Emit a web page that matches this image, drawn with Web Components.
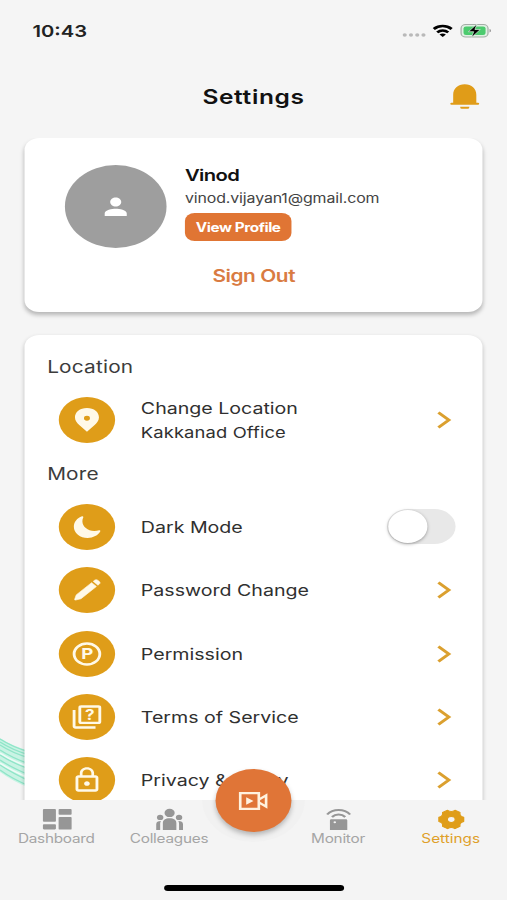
<!DOCTYPE html>
<html lang="en">
<head>
<meta charset="UTF-8">
<meta name="viewport" content="width=device-width, initial-scale=1.0">
<title>Settings</title>
<style>
    html, body {
        margin: 0;
        height: 900px;
        overflow: hidden;
        background: #f5f5f5;
    }
</style>
</head>
<body>
<settings-app></settings-app>

<script>
const define = (name, html) => {
    const template = document.createElement('template');
    template.innerHTML = html;
    customElements.define(name, class extends HTMLElement {
        constructor() {
            super();
            this.attachShadow({ mode: 'open' }).appendChild(template.content.cloneNode(true));
        }
    });
};

const icons = {
    person: '<path d="M12 12c2.2 0 4-1.8 4-4s-1.8-4-4-4-4 1.8-4 4 1.8 4 4 4zm0 2c-2.7 0-8 1.3-8 4v2.4h16V18c0-2.7-5.3-4-8-4z"/>',
    bell: '<path d="M3.600 17.600V10.500C3.600 5 7 1.200 12 1.200s8.400 3.800 8.400 9.300v7.100h1.200a.9.9 0 0 1 0 1.800H2.400a.9.9 0 0 1 0-1.800zM8.700 21h6.600v.5q0 1.400-1.200 1.400H9.900Q8.700 22.900 8.700 21.500z"/>',
    pin: '<path fill-rule="evenodd" d="M12 1.800C7 1.800 3.600 5.300 3.600 9.800c0 2.700 1.500 4.900 3.400 6.900L12 22l5-5.300c1.900-2 3.400-4.200 3.400-6.900 0-4.500-3.400-8-8.400-8zm0 6.600a2.100 2.100 0 1 1 0 4.200 2.100 2.100 0 0 1 0-4.200z"/>',
    moon: '<g transform="translate(1.500 1.500) scale(.0415)"><path d="M264 480A232 232 0 0 1 32 248c0-94 54-178.280 137.610-214.670a16 16 0 0 1 21.060 21.060C181.070 76.430 176 104.660 176 136c0 110.280 89.720 200 200 200 31.340 0 59.570-5.070 81.610-14.670a16 16 0 0 1 21.060 21.060C442.280 426 358 480 264 480z"/></g>',
    pencil: '<path d="M15.300 5.700l3.300 3.300L7.800 19.500l-3.800 1.100c-.5.100-.7-.1-.6-.6L4.500 16.200zM16.400 4.600l1-1c.6-.6 1.500-.6 2.100 0l1.200 1.200c.6.600.6 1.500 0 2.100L19.700 7.900z" stroke="currentColor" stroke-width=".5"/>',
    parking: '<circle cx="12" cy="12" r="9" fill="none" stroke="currentColor" stroke-width="2"/><text x="12.300" y="16.600" text-anchor="middle" font-family="Inter, sans-serif" font-weight="700" font-size="13">P</text>',
    terms: '<path d="M4 6H2v14c0 1.100.9 2 2 2h14v-2H4z"/><rect x="7" y="3" width="14" height="14" rx="1" fill="none" stroke="currentColor" stroke-width="2"/><text x="14" y="14.600" text-anchor="middle" font-family="Inter, sans-serif" font-weight="700" font-size="12">?</text>',
    lock: '<path d="M12 17c1.100 0 2-.9 2-2s-.9-2-2-2-2 .9-2 2 .9 2 2 2zm6-9h-1V6c0-2.760-2.240-5-5-5S7 3.240 7 6v2H6c-1.100 0-2 .9-2 2v10c0 1.100.9 2 2 2h12c1.100 0 2-.9 2-2V10c0-1.100-.9-2-2-2zM8.900 6c0-1.710 1.390-3.100 3.100-3.100s3.100 1.390 3.100 3.100v2H8.900V6zM18 20H6V10h12v10z"/>',
    chevron: '<path d="M10 4.500L18.500 12 10 19.500" fill="none" stroke="currentColor" stroke-width="2.700"/>',
    dashboard: '<rect x="1" y="2" width="10.200" height="12.200" rx=".8"/><rect x="1" y="16.500" width="10.200" height="5" rx=".8"/><rect x="13.300" y="2" width="10.200" height="5.400" rx=".8"/><rect x="13.300" y="9.600" width="10.200" height="12" rx=".8"/>',
    group: '<circle cx="12" cy="5.700" r="4"/><circle cx="4.600" cy="10" r="2.500"/><circle cx="19.400" cy="10" r="2.500"/><path d="M6.700 22v-6.500c0-3.200 2-4.700 5.300-4.700s5.300 1.500 5.300 4.700V22zM1.500 22v-5.500c0-2 1.300-3 3.700-3-.5 1-.6 1.600-.6 3V22zM22.500 22v-5.500c0-2-1.300-3-3.700-3 .5 1 .6 1.600.6 3V22z"/>',
    remote: '<path fill-rule="evenodd" d="M6.200 11.800h11.600q1 0 1 1V22H5.200v-9.200q0-1 1-1zM9 13.700a1 1 0 1 0 0 2 1 1 0 0 0 0-2z"/><path d="M3 7.200c4.600-5.800 13.400-5.800 18 0M6.800 9.600c2.800-3.300 7.600-3.300 10.400 0" fill="none" stroke="currentColor" stroke-width="1.900"/>',
    gear: '<g transform="translate(0 .9) scale(1 .92)"><path fill-rule="evenodd" d="M21.700 9.750V14.250Q18.100 15.500 18.800 19.300L14.900 21.600Q12 19 9.100 21.600L5.200 19.300Q5.900 15.500 2.300 14.250V9.750Q5.900 8.500 5.200 4.700L9.100 2.400Q12 5 14.900 2.400L18.800 4.700Q18.100 8.500 21.700 9.750zM12 8.900a3.100 3.100 0 1 0 0 6.200 3.100 3.100 0 0 0 0-6.200z" stroke="currentColor" stroke-width="1" stroke-linejoin="round"/></g>',
    video: '<path d="M2 4.800h14v14.400H2zM16 10.800l5.500-4v10.400l-5.500-4" fill="none" stroke="currentColor" stroke-width="2"/><path d="M6.500 8.500v7l5.500-3.500z"/>'
};

class AppIcon extends HTMLElement {
    connectedCallback() {
        if (this.shadowRoot) return;
        this.attachShadow({ mode: 'open' }).innerHTML = `
            <style>
                :host { display: block; width: 28px; height: 28px; flex: none; }
                svg { display: block; width: 100%; height: 100%; fill: currentColor; }
            </style>
            <svg viewBox="0 0 24 24">${icons[this.getAttribute('name')]}</svg>`;
    }
}
customElements.define('app-icon', AppIcon);

define('status-bar', `
<style>
    :host {
        height: 62px;
        padding: 0 13px 0 26.500px;
        display: flex;
        align-items: center;
        justify-content: space-between;
        box-sizing: border-box;
        font-size: 16.500px;
        font-weight: 600;
        color: #222;
    }
    svg { display: block; }
</style>
<span>10:43</span>
<svg width="74" height="20" viewBox="0 0 74 20">
    <g fill="#b9b9b9">
        <circle cx="3.500" cy="14" r="1.700"/><circle cx="8.600" cy="14" r="1.700"/><circle cx="13.700" cy="14" r="1.700"/><circle cx="18.800" cy="14" r="1.700"/>
    </g>
    <g fill="none" stroke="#000" stroke-width="2.500">
        <path d="M27.200 8c4.300-4 10.300-4 14.600 0M30 11.400c2.700-2.400 6.300-2.400 9 0"/>
    </g>
    <path d="M31.900 13.500q2.600-1.900 5.200 0L34.500 16z"/>
    <rect x="49.500" y="3.500" width="22" height="12.500" rx="3.800" fill="#dff0e3" stroke="#a4ada6"/>
    <rect x="51.500" y="5.500" width="18" height="8.500" rx="2" fill="#4ccb6e"/>
    <path d="M72.700 8v3.500q1.300-.5 1.300-1.800t-1.300-1.700z" fill="#999"/>
    <path d="M62.500 3L55.500 10.700h4.300L58 16.500l7.200-8h-4.400z" stroke="#dff5e5" stroke-width=".6"/>
</svg>
`);

define('page-header', `
<style>
    :host {
        height: 76px;
        padding: 0 21px 7px;
        display: grid;
        grid-template-columns: 28px 1fr 28px;
        align-items: center;
        box-sizing: border-box;
        color: #e09c18;
    }
    h1 {
        grid-column: 2;
        margin: 1px 0 0;
        text-align: center;
        font-size: 20px;
        font-weight: 600;
        letter-spacing: .5px;
        color: #111;
    }
    app-icon { width: 27px; height: 27px; justify-self: center; }
</style>
<h1><slot></slot></h1>
<app-icon name="bell"></app-icon>
`);

define('profile-card', `
<style>
    :host {
        display: block;
        height: 174px;
        margin: 0 19.800px 0 20.200px;
        padding-top: 26.500px;
        box-sizing: border-box;
        background: #fff;
        border-radius: 12px;
        box-shadow: 0 3px 4px rgba(0, 0, 0, .26);
    }
    .top { display: flex; padding-left: 32.800px; }
    .avatar {
        width: 83px;
        height: 83px;
        border-radius: 50%;
        background: #9e9e9e;
        color: #fff;
        display: flex;
        align-items: center;
        justify-content: center;
        margin-right: 15px;
    }
    .avatar app-icon { width: 27px; height: 27px; }
    .name { font-size: 16.500px; line-height: 21px; font-weight: 600; letter-spacing: -.45px; color: #111; }
    .mail { font-size: 13px; line-height: 18px; margin-top: 3px; margin-bottom: 6.500px; letter-spacing: -.1px; color: #444; }
    .button {
        width: 87px;
        height: 28px;
        border-radius: 8px;
        background: #e07534;
        color: #fff;
        font-size: 12.500px;
        font-weight: 700;
        letter-spacing: -.35px;
        line-height: 29px;
        text-align: center;
    }
    .out {
        margin-top: 17px;
        text-align: center;
        font-size: 17px;
        line-height: 22px;
        font-weight: 600;
        letter-spacing: -.35px;
        color: #d97b42;
    }
</style>
<div class="top">
    <div class="avatar"><app-icon name="person"></app-icon></div>
    <div>
        <div class="name"><slot name="name"></slot></div>
        <div class="mail"><slot name="mail"></slot></div>
        <div class="button">View Profile</div>
    </div>
</div>
<div class="out">Sign Out</div>
`);

define('list-heading', `
<style>
    :host {
        display: block;
        height: 43.200px;
        line-height: 45px;
        padding-left: 18.300px;
        font-size: 17px;
        letter-spacing: .15px;
        color: #3c3c3c;
    }
</style>
<slot></slot>
`);

define('toggle-switch', `
<style>
    :host {
        display: block;
        width: 56px;
        height: 35px;
        padding: 1px;
        box-sizing: border-box;
        border-radius: 18px;
        background: #e8e8e8;
    }
    div {
        width: 32px;
        height: 32.500px;
        border-radius: 50%;
        background: #fff;
        box-shadow: 0 1px 3px rgba(0, 0, 0, .35);
    }
</style>
<div></div>
`);

const rowTemplate = document.createElement('template');
rowTemplate.innerHTML = `
<style>
    :host {
        height: 63.400px;
        padding: 0 22px 0 27.800px;
        display: flex;
        align-items: center;
        font-size: 16px;
        color: #303030;
    }
    .circle {
        width: 46px;
        height: 46px;
        border-radius: 50%;
        background: #df9d19;
        color: #fff9e8;
        display: flex;
        align-items: center;
        justify-content: center;
    }
    .text { flex: 1; margin: 0 0 0 21px; line-height: 24px; white-space: nowrap; }
    .chevron { width: 24px; height: 24px; color: #dba02f; }
    ::slotted([slot=note]) { display: block; font-size: 15px; line-height: 25px; letter-spacing: .1px; }
</style>
<div class="circle"><app-icon></app-icon></div>
<div class="text"><slot></slot><slot name="note"></slot></div>
<slot name="end"><app-icon class="chevron" name="chevron"></app-icon></slot>
`;
class SettingsRow extends HTMLElement {
    constructor() {
        super();
        const content = rowTemplate.content.cloneNode(true);
        content.querySelector('.circle app-icon').setAttribute('name', this.getAttribute('icon'));
        this.attachShadow({ mode: 'open' }).appendChild(content);
    }
}

define('list-card', `
<style>
    :host {
        display: block;
        height: 500px;
        margin: 23px 19.800px 0 20.200px;
        padding-top: 10.300px;
        background: #fff;
        border-radius: 12px;
        box-shadow: 0 2px 4px rgba(0, 0, 0, .2);
    }
</style>
<slot></slot>
`);

define('nav-item', `
<style>
    :host {
        display: flex;
        flex-direction: column;
        align-items: center;
        padding-top: 7px;
        font-size: 12.500px;
        line-height: 15px;
        letter-spacing: -.2px;
        color: #a5a5a5;
    }
    :host([active]) { color: #dfa029; letter-spacing: 0; }
    ::slotted(app-icon) { width: 25px; height: 25px; margin-bottom: -1px; }
    ::slotted(app-icon[name=dashboard]), ::slotted(app-icon[name=group]), ::slotted(app-icon[name=remote]) { color: #969696; }
    ::slotted(app-icon[name=gear]) { color: #df9d19; }
</style>
<slot name="icon"></slot>
<slot></slot>
`);

define('bottom-nav', `
<style>
    :host {
        display: block;
        position: relative;
        height: 100px;
        flex: none;
        background: #f4f4f4;
    }
    .items { display: grid; height: 85.400px; grid-template-columns: 92px 92px 1fr 92px 92px; }
    .items ::slotted(:nth-child(3)) { grid-column: 4; }
    .fab {
        position: absolute;
        top: -31px;
        left: 176.200px;
        width: 62px;
        height: 63px;
        border-radius: 50%;
        background: #e07537;
        color: #fff2df;
        display: flex;
        align-items: center;
        justify-content: center;
        box-shadow: 0 3px 5px rgba(0, 0, 0, .25);
    }
    .notch {
        position: absolute;
        top: 0;
        left: 165px;
        width: 84px;
        height: 42px;
        border-radius: 0 0 42px 42px;
        background: #f1f1f1;
    }
    .fab app-icon { width: 26px; height: 26px; }
    .home { width: 147px; height: 6px; margin: 0 auto; border-radius: 3px; background: #000; }
</style>
<div class="notch"></div>
<div class="items"><slot></slot></div>
<div class="home"></div>
<div class="fab"><app-icon name="video"></app-icon></div>
`);

// Laid out on a 414px wide phone screen, widened to the 507px viewport.
define('settings-app', `
<style>
    :host {
        display: flex;
        flex-direction: column;
        position: relative;
        width: 414px;
        height: 900px;
        overflow: hidden;
        background: #f5f5f5;
        font-family: Inter, "Liberation Sans", sans-serif;
        transform: scaleX(1.22464);
        transform-origin: 0 0;
    }
    main { flex: 1; min-height: 0; overflow: hidden; position: relative; }
    .waves { position: absolute; left: 0; top: 735px; }
</style>
<svg class="waves" width="24" height="56" viewBox="0 0 24 56">
    <path d="M0 3Q10 11 24 16V53Q10 46 0 37z" fill="#c9f3e4"/>
    <g fill="none" stroke="#8fe5c8" stroke-width="1.200">
        <path d="M0 4Q10 12 24 17M0 7Q10 15 24 20M0 10Q10 18 24 23"/>
        <path d="M0 15Q10 23 24 29M0 20Q10 28 24 34M0 25Q10 33 24 40M0 30Q10 38 24 46M0 35Q10 44 24 51"/>
    </g>
    <path d="M0 18Q10 26 24 32M0 28Q10 36 24 43" fill="none" stroke="#effbf7" stroke-width="1.500"/>
</svg>
<status-bar></status-bar>
<page-header>Settings</page-header>
<main>
    <profile-card>
        <span slot="name">Vinod</span>
        <span slot="mail">vinod.vijayan1@gmail.com</span>
    </profile-card>
    <list-card>
        <list-heading>Location</list-heading>
        <settings-row icon="pin">Change Location<span slot="note">Kakkanad Office</span></settings-row>
        <list-heading>More</list-heading>
        <settings-row icon="moon">Dark Mode<toggle-switch slot="end"></toggle-switch></settings-row>
        <settings-row icon="pencil">Password Change</settings-row>
        <settings-row icon="parking">Permission</settings-row>
        <settings-row icon="terms">Terms of Service</settings-row>
        <settings-row icon="lock">Privacy &amp; Policy</settings-row>
    </list-card>
</main>
<bottom-nav>
    <nav-item><app-icon slot="icon" name="dashboard"></app-icon>Dashboard</nav-item>
    <nav-item><app-icon slot="icon" name="group"></app-icon>Colleagues</nav-item>
    <nav-item><app-icon slot="icon" name="remote"></app-icon>Monitor</nav-item>
    <nav-item active><app-icon slot="icon" name="gear"></app-icon>Settings</nav-item>
</bottom-nav>
`);

customElements.define('settings-row', SettingsRow);
</script>
</body>
</html>
